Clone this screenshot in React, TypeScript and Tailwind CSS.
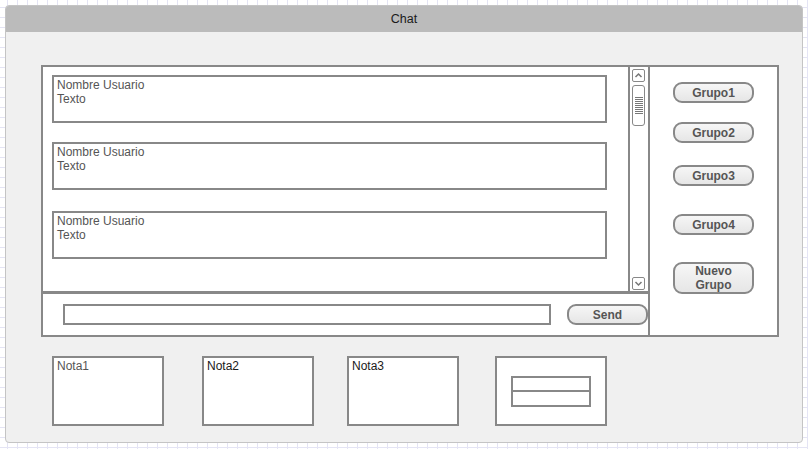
const font = "font-['Liberation_Sans',Arial,sans-serif]";

function MessageBox({ className = "" }: { className?: string }) {
  return (
    <div className={`w-[555px] h-[48px] border-2 border-[#888] bg-white px-[3px] pt-[1px] text-[12px] leading-[14px] text-[#555] ${className}`}>
      <div>Nombre Usuario</div>
      <div>Texto</div>
    </div>
  );
}

function ScrollButton({ dir }: { dir: "up" | "down" }) {
  return (
    <div className="w-[13px] h-[13px] ml-[2px] border-[1.5px] border-[#888] rounded-[2px] bg-white flex items-center justify-center">
      <svg width="9" height="9" viewBox="0 0 9 9">
        <polyline
          points={dir === "up" ? "1.5,6 4.5,3 7.5,6" : "1.5,3 4.5,6 7.5,3"}
          fill="none"
          stroke="#777"
          strokeWidth="1.5"
        />
      </svg>
    </div>
  );
}

function GroupButton({ label, className = "" }: { label: React.ReactNode; className?: string }) {
  return (
    <div
      className={`w-[81px] border-2 border-[#888] rounded-[9px] bg-[linear-gradient(to_bottom,#f6f6f6,#e6e6e6)] flex items-center justify-center text-center text-[12px] leading-[14px] font-bold text-[#555] ${className}`}
    >
      {label}
    </div>
  );
}

function Note({ label, dark, className = "" }: { label: string; dark?: boolean; className?: string }) {
  return (
    <div
      className={`w-[112px] h-[70px] border-2 border-[#888] bg-white px-[3px] pt-[1px] text-[12px] leading-[14px] ${dark ? "text-[#1a1a1a]" : "text-[#555]"} ${className}`}
    >
      {label}
    </div>
  );
}

export default function App() {
  return (
    <div
      className={`w-[808px] h-[449px] p-[5px] bg-white bg-[linear-gradient(to_right,#e4e4f4_1px,transparent_1px),linear-gradient(to_bottom,#e4e4f4_1px,transparent_1px)] bg-[size:10px_10px] bg-[position:7px_7px] ${font}`}
    >
      <div className="w-[798px] h-[438px] border border-[#c4c4c4] rounded-[4px] bg-[#f0f0f0] overflow-hidden flex flex-col">
        <div className="h-[26px] bg-[#bbbbbb] flex items-center justify-center text-[12.5px] text-[#1a1a1a]">
          Chat
        </div>

        <div className="pt-[33px] pl-[35px]">
          <div className="flex w-[738px] h-[272px] border-2 border-[#888] bg-white">
            <div className="w-[605px] flex flex-col">
              <div className="h-[224px] flex">
                <div className="flex-1 pl-[9px] pt-[8px] flex flex-col">
                  <MessageBox />
                  <MessageBox className="mt-[19px]" />
                  <MessageBox className="mt-[21px]" />
                </div>
                <div className="w-[20px] border-l-2 border-[#888] pt-[2px] pb-[1px] flex flex-col justify-between">
                  <div>
                    <ScrollButton dir="up" />
                    <div className="w-[13px] h-[41px] ml-[2px] mt-[3px] border-[1.5px] border-[#888] rounded-[3px] bg-white flex items-center justify-center">
                      <svg width="8" height="18" viewBox="0 0 8 18">
                        {Array.from({ length: 9 }).map((_, i) => (
                          <line key={i} x1="0" x2="8" y1={i * 2 + 0.5} y2={i * 2 + 0.5} stroke="#777" strokeWidth="1.2" />
                        ))}
                      </svg>
                    </div>
                  </div>
                  <ScrollButton dir="down" />
                </div>
              </div>
              <div className="flex-1 border-t-[3px] border-[#888] flex items-center pl-[20px]">
                <div className="w-[488px] h-[21px] border-2 border-[#888] bg-white" />
                <GroupButton label="Send" className="ml-[16px] w-[80px] h-[21px]" />
              </div>
            </div>

            <div className="flex-1 border-l-2 border-[#888] flex flex-col items-center">
              <GroupButton label="Grupo1" className="mt-[15px] h-[21px]" />
              <GroupButton label="Grupo2" className="mt-[19px] h-[21px]" />
              <GroupButton label="Grupo3" className="mt-[22px] h-[21px]" />
              <GroupButton label="Grupo4" className="mt-[28px] h-[21px]" />
              <GroupButton
                label={
                  <span>
                    Nuevo
                    <br />
                    Grupo
                  </span>
                }
                className="mt-[27px] h-[32px]"
              />
            </div>
          </div>

          <div className="flex mt-[19px] ml-[11px]">
            <Note label="Nota1" />
            <Note label="Nota2" dark className="ml-[38px]" />
            <Note label="Nota3" dark className="ml-[33px]" />
            <div className="ml-[36px] w-[112px] h-[70px] border-2 border-[#888] bg-white flex items-center justify-center">
              <div className="w-[80px] h-[31px] border-2 border-[#888] flex flex-col">
                <div className="flex-1 border-b-2 border-[#888]" />
                <div className="flex-1" />
              </div>
            </div>
          </div>
        </div>
      </div>
    </div>
  );
}
